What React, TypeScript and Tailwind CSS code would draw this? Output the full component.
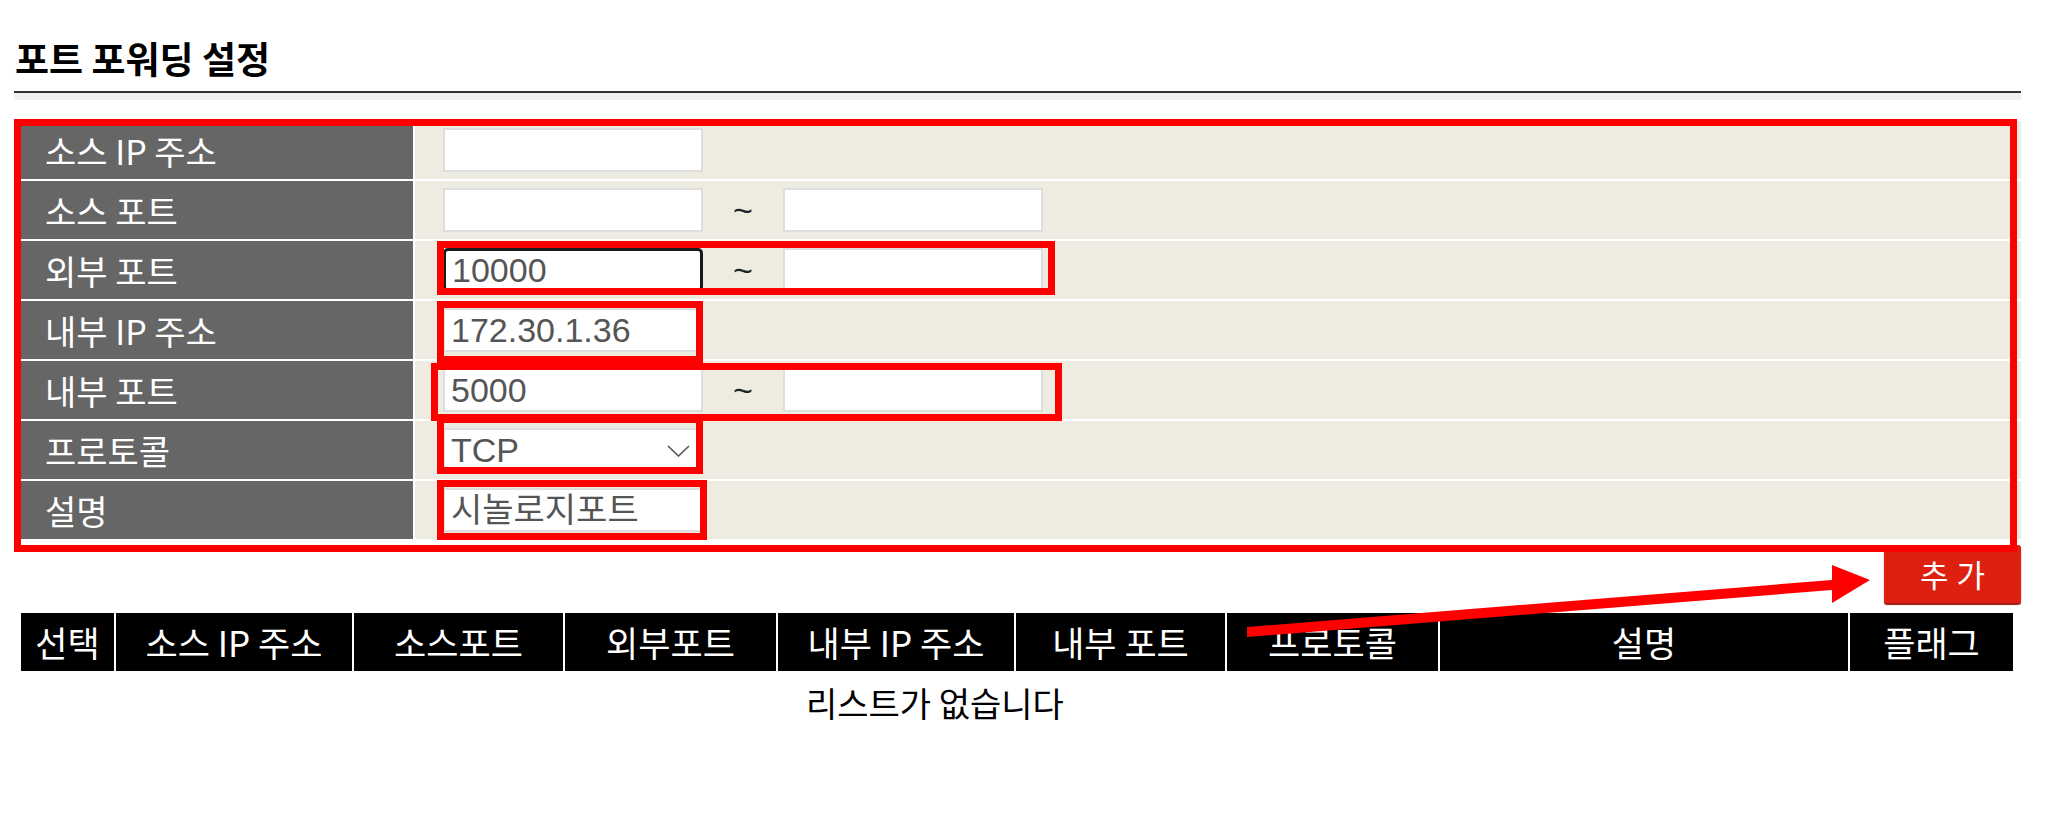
import type { ReactNode } from "react";

const inputBase =
  "h-[44px] w-[260px] bg-white px-[6px] text-[34px] text-[#555] outline-none font-['Liberation_Sans','Noto_Sans_CJK_KR',sans-serif]";

function Field({ value = "", focused = false }: { value?: string; focused?: boolean }) {
  return (
    <input
      readOnly
      defaultValue={value}
      className={
        focused
          ? `${inputBase} rounded-[5px] border-[3px] border-[#1a1a1a]`
          : `${inputBase} border-2 border-[#dedede]`
      }
    />
  );
}

function Range({ from = "", focused = false }: { from?: string; focused?: boolean }) {
  return (
    <div className="flex items-center">
      <Field value={from} focused={focused} />
      <span className="w-[80px] text-center text-[34px] text-[#222] font-['Liberation_Sans',sans-serif]">~</span>
      <Field />
    </div>
  );
}

function Row({ label, children }: { label: string; children: ReactNode }) {
  return (
    <div className="flex h-[60px] border-b-2 border-white">
      <div className="flex w-[401px] items-center border-r-2 border-white bg-[#666666] pl-[31px] text-[34px] text-white">
        {label}
      </div>
      <div className="flex flex-1 items-center bg-[#eeebe0] pl-[28px]">{children}</div>
    </div>
  );
}

const columns = [
  { title: "선택", cls: "w-[93px]" },
  { title: "소스 IP 주소", cls: "w-[238px] border-l-2 border-white" },
  { title: "소스포트", cls: "w-[211px] border-l-2 border-white" },
  { title: "외부포트", cls: "w-[213px] border-l-2 border-white" },
  { title: "내부 IP 주소", cls: "w-[238px] border-l-2 border-white" },
  { title: "내부 포트", cls: "w-[211px] border-l-2 border-white" },
  { title: "프로토콜", cls: "w-[213px] border-l-2 border-white" },
  { title: "설명", cls: "w-[410px] border-l-2 border-white" },
  { title: "플래그", cls: "w-[165px] border-l-2 border-white" },
];

export default function App() {
  return (
    <div className="relative min-h-[828px] w-[2049px] overflow-hidden bg-white pl-[14px] pr-[28px] font-['Noto_Sans_CJK_KR',sans-serif] text-black">
      <h2 className="mt-[34px] pl-[1px] text-[37px] font-bold leading-[48px]">포트 포워딩 설정</h2>
      <div className="mt-[9px] h-[2px] bg-[#333]" />
      <div className="h-[7px] bg-[#f0f0f0]" />

      <div className="mt-[21px]">
        <Row label="소스 IP 주소">
          <Field />
        </Row>
        <Row label="소스 포트">
          <Range />
        </Row>
        <Row label="외부 포트">
          <Range from="10000" focused />
        </Row>
        <Row label="내부 IP 주소">
          <Field value="172.30.1.36" />
        </Row>
        <Row label="내부 포트">
          <Range from="5000" />
        </Row>
        <Row label="프로토콜">
          <div className="relative">
            <select
              defaultValue="TCP"
              className={`${inputBase} appearance-none border-2 border-[#dedede] py-0 leading-[38px]`}
            >
              <option>TCP</option>
              <option>UDP</option>
              <option>TCP/UDP</option>
            </select>
            <svg
              className="pointer-events-none absolute right-[13px] top-[17px]"
              width="23"
              height="12"
              viewBox="0 0 23 12"
            >
              <polyline points="1,1 11.5,11 22,1" fill="none" stroke="#555" strokeWidth="1.6" />
            </svg>
          </div>
        </Row>
        <Row label="설명">
          <Field value="시놀로지포트" />
        </Row>
      </div>

      <div className="mt-[4px] flex justify-end">
        <button className="h-[58px] w-[137px] rounded-[3px] bg-[#dd2010] pl-[8px] text-[31px] tracking-[8px] text-white shadow-[0_2px_1px_#a3170c]">
          추가
        </button>
      </div>

      <div className="ml-[7px] mt-[10px] flex h-[58px] w-[1992px] bg-black text-[35px] text-white">
        {columns.map((c) => (
          <div key={c.title} className={`flex items-center justify-center ${c.cls}`}>
            {c.title}
          </div>
        ))}
      </div>
      <div className="ml-[792px] mt-[12px] text-[34px] leading-[40px]">리스트가 없습니다</div>

      {/* annotation overlay */}
      <div className="pointer-events-none absolute left-[14px] top-[119px] h-[433px] w-[2003px] border-[7px] border-[#fe0000]" />
      <div className="pointer-events-none absolute left-[437px] top-[241px] h-[54px] w-[618px] border-[7px] border-[#fe0000]" />
      <div className="pointer-events-none absolute left-[437px] top-[301px] h-[62px] w-[266px] border-[7px] border-[#fe0000]" />
      <div className="pointer-events-none absolute left-[431px] top-[363px] h-[58px] w-[631px] border-[7px] border-[#fe0000]" />
      <div className="pointer-events-none absolute left-[437px] top-[416px] h-[58px] w-[266px] border-[7px] border-[#fe0000]" />
      <div className="pointer-events-none absolute left-[437px] top-[480px] h-[60px] w-[270px] border-[7px] border-[#fe0000]" />
      <svg className="pointer-events-none absolute left-0 top-0" width="2049" height="828">
        <polygon
          points="1247,627 1832,580 1832,565 1870,580 1832,603 1832,590 1247,637"
          fill="#fe0000"
        />
      </svg>
    </div>
  );
}
